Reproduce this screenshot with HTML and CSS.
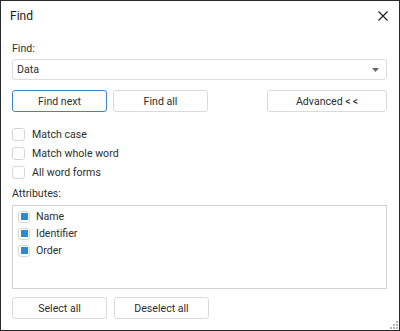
FILE: index.html
```html
<!DOCTYPE html>
<html>
<head>
<meta charset="utf-8">
<link rel="stylesheet" href="styles.css">
</head>
<body>
<div class="dialog">
  <div class="header">
    <span class="title">Find</span>
    <svg class="close" width="10" height="10" viewBox="0 0 10 10"><path d="M0.5 0.5 L9.5 9.5 M9.5 0.5 L0.5 9.5" stroke="#1a1a1a" stroke-width="1.1" fill="none"/></svg>
  </div>
  <div class="body">
    <div class="label">Find:</div>
    <div class="combo">
      <span class="combo-text">Data</span>
      <svg class="caret" width="7" height="4" viewBox="0 0 7 4"><path d="M0 0 H7 L3.5 4 Z" fill="#666"/></svg>
    </div>
    <div class="btn-row">
      <button class="btn primary">Find next</button>
      <button class="btn">Find all</button>
      <button class="btn wide">Advanced <span class="chev">&lt;&lt;</span></button>
    </div>
    <div class="options">
      <div class="opt"><span class="box"></span><span>Match case</span></div>
      <div class="opt"><span class="box"></span><span>Match whole word</span></div>
      <div class="opt"><span class="box"></span><span>All word forms</span></div>
    </div>
    <div class="label attr-label">Attributes:</div>
    <div class="list">
      <div class="item"><span class="cbox"><span class="mark"></span></span><span>Name</span></div>
      <div class="item"><span class="cbox"><span class="mark"></span></span><span>Identifier</span></div>
      <div class="item"><span class="cbox"><span class="mark"></span></span><span>Order</span></div>
    </div>
    <div class="btn-row bottom">
      <button class="btn">Select all</button>
      <button class="btn">Deselect all</button>
    </div>
  </div>
  <svg class="grip" width="9" height="9" viewBox="0 0 9 9">
    <rect x="7" y="1" width="2" height="2" fill="#b5b5b5"/>
    <rect x="4" y="4" width="2" height="2" fill="#b5b5b5"/>
    <rect x="7" y="4" width="2" height="2" fill="#b5b5b5"/>
    <rect x="1" y="7" width="2" height="2" fill="#b5b5b5"/>
    <rect x="4" y="7" width="2" height="2" fill="#b5b5b5"/>
    <rect x="7" y="7" width="2" height="2" fill="#b5b5b5"/>
  </svg>
</div>
</body>
</html>
```
FILE: styles.css
```css
* { box-sizing: border-box; }
html, body { margin: 0; padding: 0; background: #fff; }
body {
  font-family: Roboto, "Noto Sans", sans-serif;
  font-size: 10.6px;
  color: #2e2e2e;
}
.dialog {
  position: relative;
  width: 400px;
  height: 331px;
  border: 1px solid #2a2a2a;
  background: #fff;
}
.header {
  height: 30px;
  display: flex;
  align-items: center;
  justify-content: space-between;
  padding: 0 11px 0 9px;
}
.title { font-size: 12px; color: #1a1a1a; }
.close { display: block; }
.body { padding: 0 12px 0 11px; }
.label { height: 16px; line-height: 16px; margin-top: 10px; }
.combo {
  margin-top: 2px;
  height: 21px;
  border: 1px solid #dcdcdc;
  border-radius: 3px;
  display: flex;
  align-items: center;
  justify-content: space-between;
  padding: 0 7px 0 4px;
}
.caret { display: block; }
.btn-row { display: flex; gap: 6px; margin-top: 10px; }
.btn {
  font: inherit;
  color: #2e2e2e;
  width: 95px;
  height: 22px;
  background: #fff;
  border: 1px solid #dadada;
  border-radius: 3px;
  padding: 0;
}
.btn.primary { border-color: #3a85c3; }
.btn.wide { width: 120px; margin-left: auto; }
.chev { letter-spacing: 2px; margin-right: -2px; }
.options { margin-top: 13px; }
.opt {
  height: 19px;
  display: flex;
  align-items: center;
  gap: 7px;
}
.box {
  width: 13px;
  height: 13px;
  border: 1px solid #d6d6d6;
  border-radius: 3px;
  flex: none;
}
.attr-label { margin-top: 4px; }
.list {
  margin-top: 3px;
  height: 84px;
  border: 1px solid #d2d2d2;
  padding: 2px 5px;
}
.item {
  height: 17px;
  display: flex;
  align-items: center;
  gap: 6px;
}
.cbox {
  width: 12px;
  height: 12px;
  border: 1px solid #d6d6d6;
  border-radius: 3px;
  display: flex;
  align-items: center;
  justify-content: center;
  flex: none;
}
.mark { width: 7px; height: 7px; background: #2b8bd2; }
.btn-row.bottom { margin-top: 8px; gap: 7px; }
.grip { position: absolute; right: 1px; bottom: 1px; }
```
